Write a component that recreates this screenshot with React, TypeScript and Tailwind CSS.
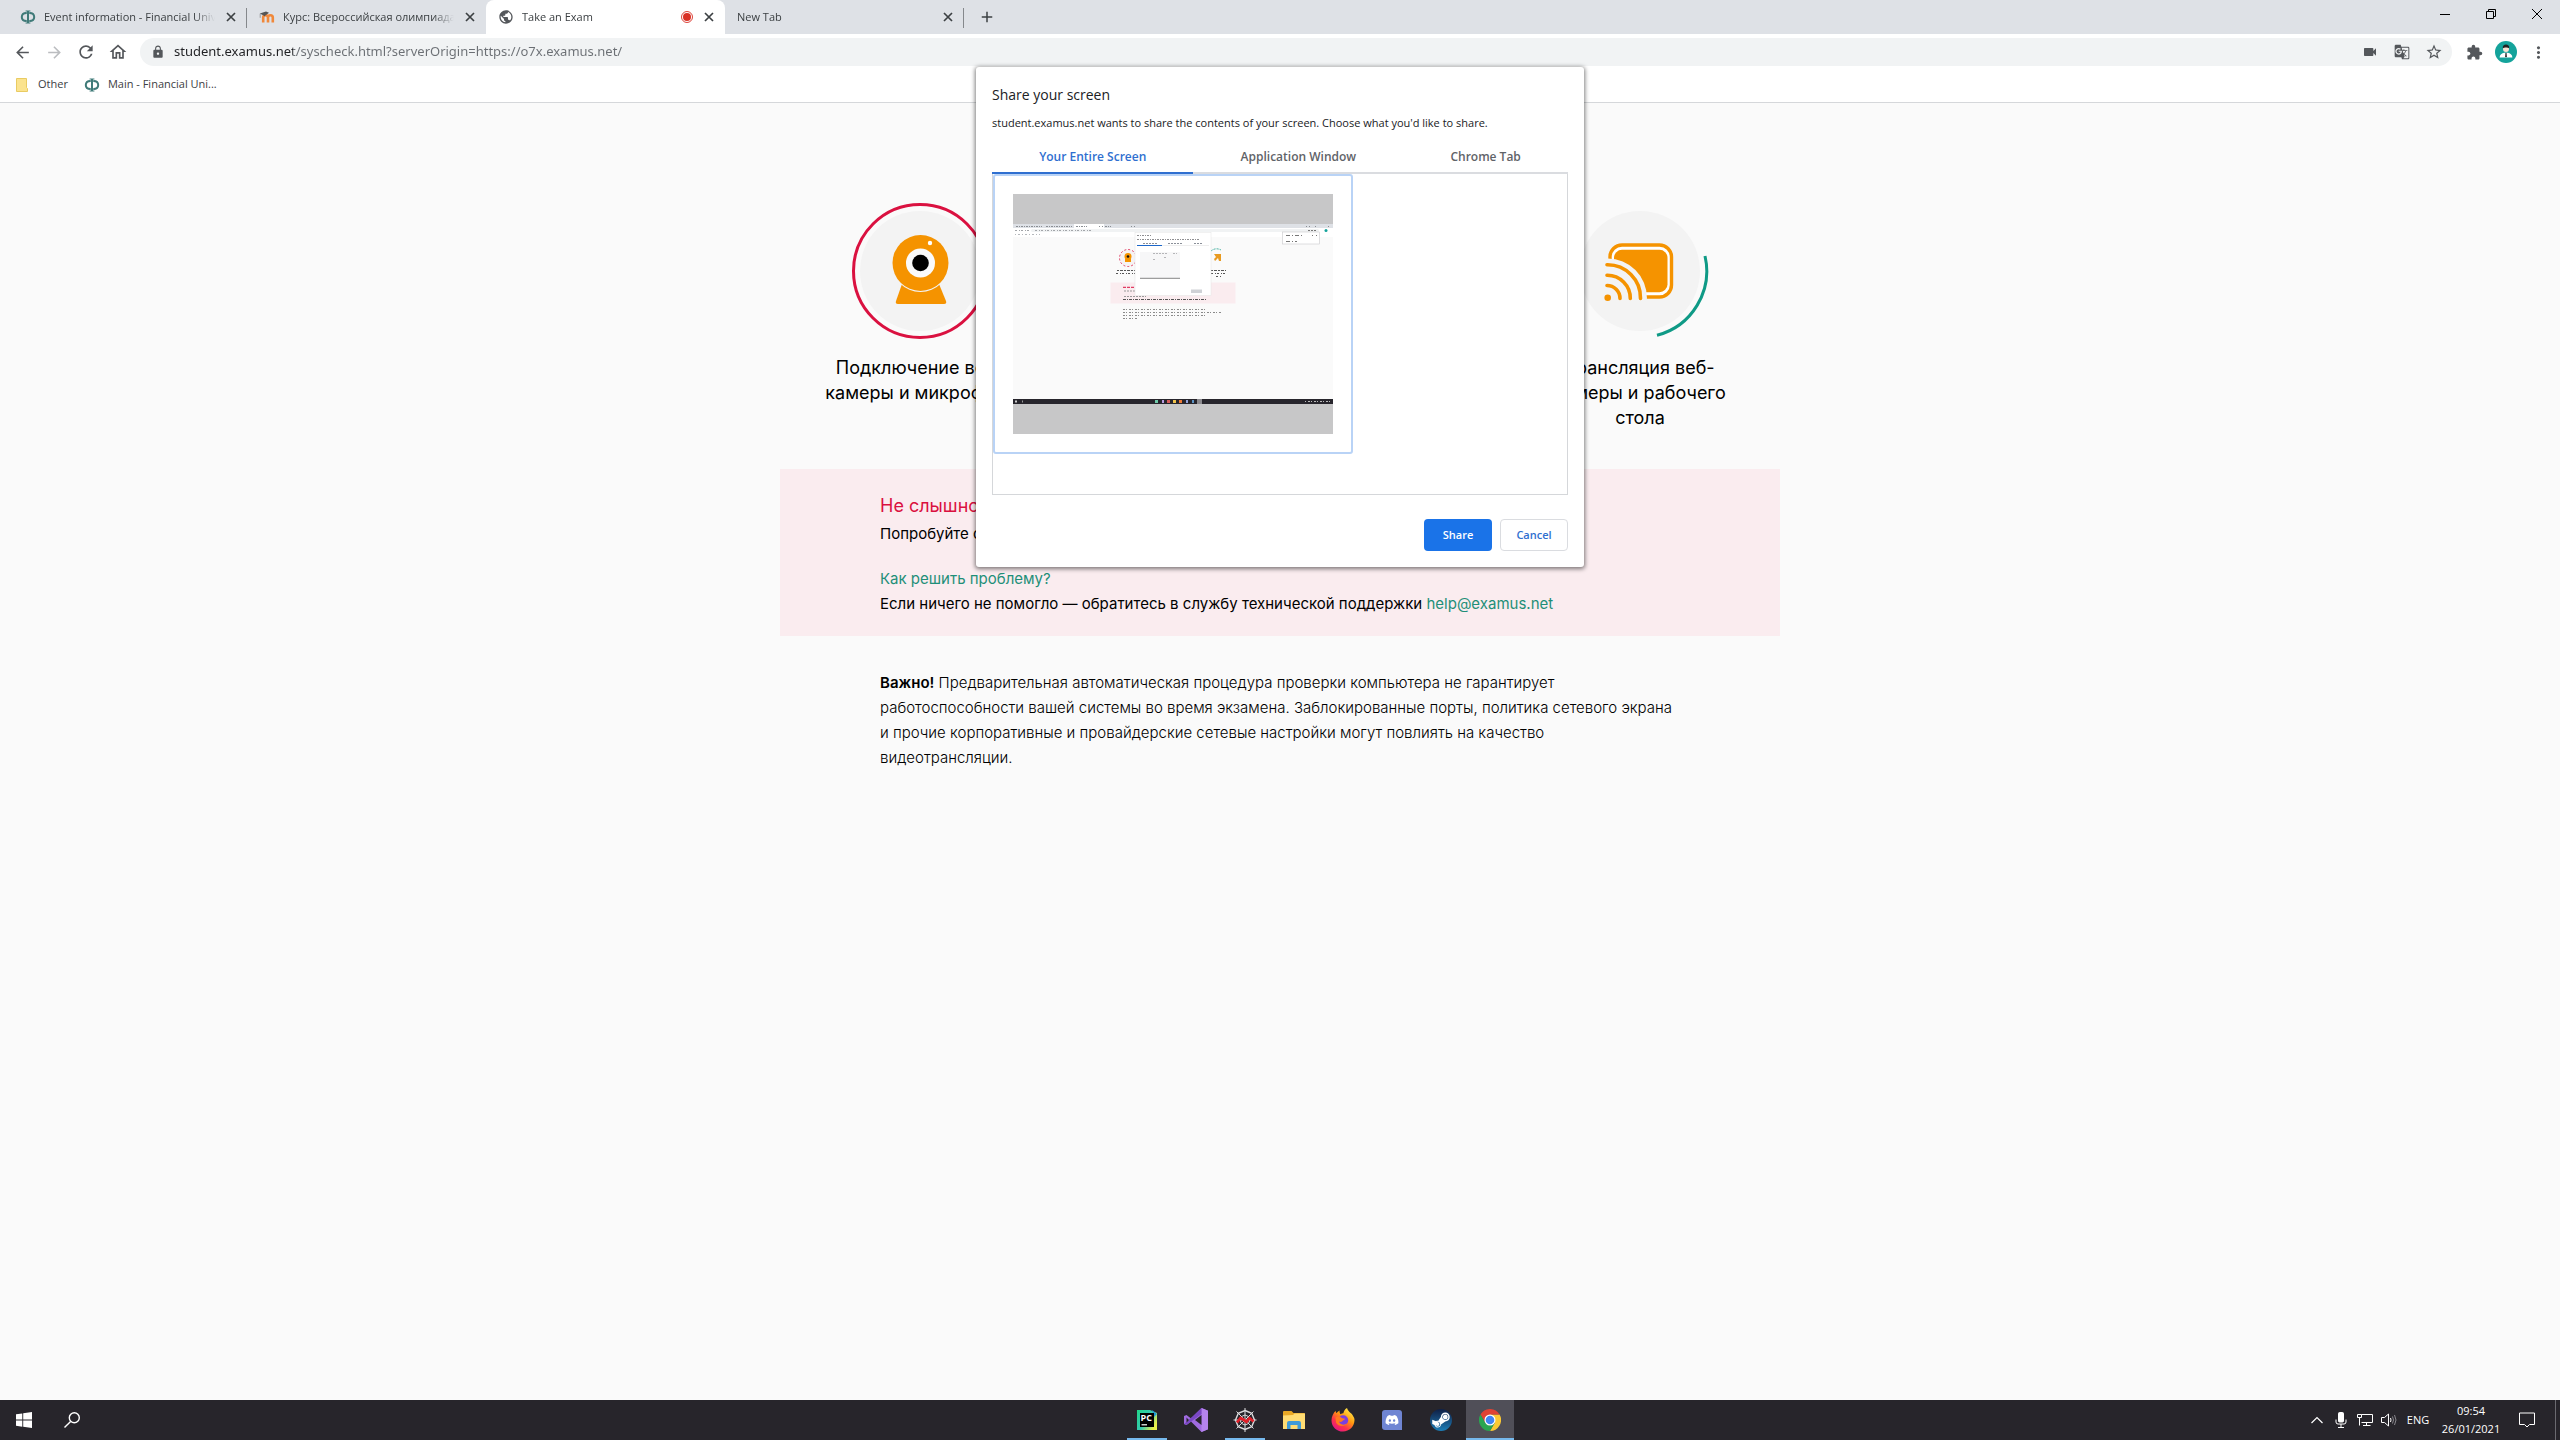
import type { ReactNode } from "react";
import {
  MdAdd,
  MdArrowBack,
  MdArrowForward,
  MdExtension,
  MdGTranslate,
  MdLock,
  MdMoreVert,
  MdOutlineHome,
  MdPublic,
  MdRefresh,
  MdStarBorder,
  MdVideocam,
} from "react-icons/md";
import { FaDiscord, FaSteamSymbol } from "react-icons/fa";

/* ---------- small drawings ---------- */

function PhiIcon() {
  return (
    <svg viewBox="0 0 16 16" className="size-4 shrink-0" fill="none" stroke="#3f7a78">
      <path d="M6.500 3.900Q1.800 4 1.800 8t4.700 4.100M9.500 3.900q4.700.1 4.700 4.100t-4.700 4.100" strokeWidth="2" />
      <path d="M5.500 4h5M5.500 12h5" strokeWidth="1" />
      <path d="M8 2v12" strokeWidth="2" />
      <path d="M5.600 2h4.800M5.600 14h4.800" strokeWidth="1" />
    </svg>
  );
}

function MoodleIcon() {
  return (
    <svg viewBox="0 0 16 16" className="size-4 shrink-0" fill="none">
      <path d="M4.200 13.500V8.600a2.400 2.400 0 0 1 4.800 0v4.900M9 8.600a2.400 2.400 0 0 1 4.800 0v4.900" stroke="#f0883a" strokeWidth="2.600" />
      <path d="M.8 4.600 7 2.600l3 1.200-4.600 3.400-1.200-.9z" fill="#555" />
      <path d="M1.200 4.800v4" stroke="#8a8a8a" strokeWidth=".8" />
    </svg>
  );
}

function CloseIcon() {
  return (
    <svg viewBox="0 0 10 10" className="size-[10px]" fill="none" stroke="currentColor" strokeWidth="1.700">
      <path d="m1 1 8 8M9 1 1 9" />
    </svg>
  );
}

function RecordingDot() {
  return (
    <svg viewBox="0 0 12 12" className="size-3 shrink-0">
      <circle cx="6" cy="6" r="5.500" fill="#fff" stroke="#d93025" strokeWidth=".9" />
      <circle cx="6" cy="6" r="4" fill="#d93025" />
    </svg>
  );
}

function AvatarIcon() {
  return (
    <svg viewBox="0 0 22 22" className="size-[22px]">
      <circle cx="11" cy="11" r="11" fill="#14a39b" />
      <path d="M4.600 16.400c.2-3 2.200-3.900 4.600-4.600h3.600c2.400.7 4.400 1.600 4.600 4.600z" fill="#fff" />
      <circle cx="11" cy="8" r="3" fill="#f7e3d4" />
      <path d="M7.800 7.200C7.400 4.600 9 3.400 11 3.400s3.600 1.200 3.200 3.800C13 6.200 9 6.200 7.800 7.200z" fill="#222" />
      <path d="M10.400 12h1.200l.3 3.400-.9 1-.9-1z" fill="#333" />
    </svg>
  );
}

function WebcamDrawing() {
  return (
    <svg viewBox="0 0 140 140" className="size-[140px]" role="img" aria-label="Веб-камера">
      <circle cx="70" cy="70" r="60" fill="#f3f3f3" />
      <circle cx="70" cy="70" r="66.500" fill="none" stroke="#da1140" strokeWidth="3" />
      <path d="M52 83h37l7 17q1 3-2 3H48q-3 0-2-3z" fill="#f59300" />
      <circle cx="70.500" cy="62" r="29" fill="#f3f3f3" />
      <circle cx="70.500" cy="62" r="28" fill="#f59300" />
      <circle cx="70.500" cy="62" r="14.500" fill="#fafafa" />
      <circle cx="70.500" cy="62" r="8.300" fill="#000" />
      <circle cx="80" cy="42" r="2.200" fill="#fff" />
    </svg>
  );
}

function CastDrawing() {
  return (
    <svg viewBox="0 0 140 140" className="size-[140px]" role="img" aria-label="Трансляция">
      <circle cx="70" cy="70" r="60" fill="#f3f3f3" />
      <path d="M135 55A66.500 66.500 0 0 1 87 134.300" fill="none" stroke="#0f9a86" strokeWidth="3" />
      <rect x="40" y="44" width="61.500" height="52" rx="12" fill="#fff" stroke="#f59300" strokeWidth="3.400" />
      <rect x="44" y="48.800" width="53.500" height="42.400" rx="8" fill="#f59300" />
      <path d="M34 57.500h3.700A39.200 39.200 0 0 1 76.900 96.700V102H34z" fill="#f3f3f3" />
      <g fill="none" stroke="#f59300" strokeWidth="3.600" strokeLinecap="round">
        <path d="M37 63.800a33 33 0 0 1 33.500 33.700" />
        <path d="M37 74.200a23 23 0 0 1 23.300 23.300" />
        <path d="M37 84.500a13 13 0 0 1 13 13" />
      </g>
      <circle cx="37.700" cy="96.700" r="3.300" fill="#f59300" />
    </svg>
  );
}

function ScreenPreview() {
  return (
    <svg viewBox="0 0 320 240" className="block w-full" role="img" aria-label="Screen preview">
      <rect width="320" height="240" fill="#c7c7c8" />
      <rect y="30" width="320" height="180" fill="#fafafa" />
      <rect y="30" width="320" height="4.500" fill="#dee1e6" />
      <rect x="61" y="30" width="30" height="4.500" fill="#fff" />
      <rect y="34" width="320" height="9" fill="#fff" />
      <rect x="18" y="35" width="288" height="3" rx="1.500" fill="#f1f3f4" />
      <g strokeWidth="1" fill="none">
        <path d="M3 32.500h26M33 32.500h26M63 32.500h11M92 32.500h6" stroke="#8b8f94" strokeDasharray="2 1 1 1" />
        <path d="M86 32.500h4M118 32.500h6M293 32.500h4M302 32.500h3M315 32.500h3" stroke="#8b8f94" strokeDasharray="1 2" />
        <path d="M2 36.500h14M22 36.500h56" stroke="#a2a5a9" strokeDasharray="2 2 1 1" />
        <path d="M2 40.500h25" stroke="#b5b8bc" strokeDasharray="1 2 2 2" />
        <path d="M295 36.500h9" stroke="#777" strokeDasharray="2 1" />
      </g>
      <circle cx="313" cy="36.500" r="1.500" fill="#14a39b" />
      <rect x="97.500" y="88.500" width="125" height="21" fill="#faecef" />
      <circle cx="115" cy="64" r="8.500" fill="#f6f3f3" stroke="#da1140" strokeWidth=".8" strokeDasharray="2 2" />
      <circle cx="115" cy="62.500" r="3.500" fill="#f59300" />
      <rect x="112" y="65" width="6" height="3" fill="#f59300" />
      <circle cx="115" cy="62.500" r="1.300" fill="#111" />
      <path d="M198 57a8.500 8.500 0 0 1 10-1" stroke="#0f9a86" strokeWidth=".8" fill="none" strokeDasharray="2 1" />
      <path d="M201 60h7v7h-2l-1-3-3 3-1-2 2-2z" fill="#e89a20" />
      <g stroke="#555" strokeWidth="1" fill="none">
        <path d="M104 76.500h18M198 76.500h15" strokeDasharray="2 1 3 1" />
        <path d="M103 79.500h19M198 79.500h16M203 82.500h5" strokeDasharray="2 2 1 1" />
        <path d="M111 97h11M111 102.500h22" stroke="#999" strokeDasharray="2 1" />
        <path d="M110 105.500h83" strokeDasharray="3 1 1 1" />
        <path d="M110 115.500h84M110 118.500h98M110 121.500h84M110 124.500h14" stroke="#8a8a8a" strokeDasharray="2 1 1 2" />
        <path d="M110 93.300h12" stroke="#da1140" strokeDasharray="3 1" />
      </g>
      <rect x="122" y="38.500" width="76" height="63" fill="#fff" stroke="#e4e4e4" strokeWidth=".5" />
      <g fill="none" strokeWidth="1">
        <path d="M124 41.500h15M124 45.500h63" stroke="#8f8f92" strokeDasharray="2 1 1 1" />
        <path d="M130 49.500h14M155 49.500h14M181 49.500h9" stroke="#8b9099" strokeDasharray="2 1" />
        <path d="M124 51.500h25" stroke="#1b66c9" />
        <path d="M149 51.500h47" stroke="#ddd" strokeWidth=".5" />
      </g>
      <rect x="127" y="58" width="40" height="26" fill="#f7f7f8" />
      <path d="M127 84.300h40" stroke="#666" strokeWidth=".8" />
      <path d="M140 59.500h14M160 59.500h4M140 65.500h3M151 63.500h3" stroke="#b5b5b8" strokeDasharray="2 1" />
      <rect x="178" y="95.500" width="11" height="3.500" fill="#cfd2d6" />
      <rect x="269.500" y="38" width="37" height="12" fill="#fff" stroke="#c9c9cb" strokeWidth=".6" />
      <path d="M273 41.500h17M273 47.500h11" stroke="#777" strokeDasharray="4 2 1 2" fill="none" />
      <path d="M299 41.500h5" stroke="#777" strokeDasharray="1 3" fill="none" />
      <rect y="205" width="320" height="5" fill="#27252c" />
      <rect x="2" y="206.500" width="2" height="2" fill="#ccc" />
      <rect x="9" y="206.500" width="1" height="2" fill="#999" />
      <rect x="142" y="206" width="3" height="3" fill="#6fc9a8" />
      <rect x="149" y="206" width="2" height="3" fill="#b79ae0" />
      <rect x="154" y="206" width="3" height="3" fill="#d65a5a" />
      <rect x="160" y="206" width="3" height="3" fill="#f0c24a" />
      <rect x="166" y="206" width="3" height="3" fill="#ef7a35" />
      <rect x="173" y="206" width="2" height="3" fill="#95a3dc" />
      <rect x="179" y="206" width="2" height="3" fill="#5c93c4" />
      <rect x="184" y="205" width="5" height="5" fill="#8b8a8f" />
      <path d="M292 207.500h26" stroke="#bbb" strokeDasharray="1 2 2 1" />
    </svg>
  );
}

/* ---------- browser window ---------- */

function ToolButton({ label, children }: { label: string; children: ReactNode }) {
  return (
    <button type="button" aria-label={label} className="flex h-7 w-8 shrink-0 items-center justify-center text-[#54575b]">
      {children}
    </button>
  );
}

type TabProps = { title: string; icon?: ReactNode; active?: boolean; recording?: boolean; divider?: boolean };

function BrowserTab({ title, icon, active, recording, divider }: TabProps) {
  return (
    <div
      className={
        active
          ? "flex h-full w-[239px] min-w-0 items-center rounded-t-lg bg-white pr-2 pl-3"
          : "relative flex h-full w-[239px] min-w-0 items-center pr-2 pl-3"
      }
    >
      <button type="button" className="flex min-w-0 flex-1 items-center gap-2 text-left text-[11px] text-[#3c4043]">
        {icon}
        <span className="flex-1 overflow-hidden whitespace-nowrap [mask-image:linear-gradient(to_right,black_88%,transparent)]">
          {title}
        </span>
      </button>
      {recording && <RecordingDot />}
      <button type="button" aria-label={"Close " + title} className="ml-2 flex size-4 items-center justify-center text-[#3c4043]">
        <CloseIcon />
      </button>
      {divider && <span className="absolute top-2 right-0 h-5 w-px bg-[#85888c]" />}
    </div>
  );
}

function TabStrip() {
  return (
    <div className="flex h-[34px] bg-[#dee1e6] pl-2">
      <BrowserTab title="Event information - Financial University" icon={<PhiIcon />} divider />
      <BrowserTab title="Курс: Всероссийская олимпиада школьников" icon={<MoodleIcon />} />
      <BrowserTab title="Take an Exam" icon={<MdPublic className="size-4 shrink-0 text-[#54575b]" />} active recording />
      <BrowserTab title="New Tab" divider />
      <button type="button" aria-label="New tab" className="ml-[11px] flex w-6 items-center justify-center text-[#3c4043]">
        <MdAdd className="size-[18px]" />
      </button>
      <div className="ml-auto flex h-7 text-black">
        <button type="button" aria-label="Minimize" className="flex w-[46px] items-center justify-center">
          <svg viewBox="0 0 10 10" className="size-[10px]" stroke="currentColor"><path d="M0 5.500h10" /></svg>
        </button>
        <button type="button" aria-label="Restore" className="flex w-[46px] items-center justify-center">
          <svg viewBox="0 0 10 10" className="size-[10px]" fill="none" stroke="currentColor">
            <path d="M.5 2.500h7v7h-7zM2.500 2.500v-2h7v7h-2" />
          </svg>
        </button>
        <button type="button" aria-label="Close" className="flex w-[46px] items-center justify-center">
          <svg viewBox="0 0 10 10" className="size-[10px]" fill="none" stroke="currentColor"><path d="m0 0 10 10M10 0 0 10" /></svg>
        </button>
      </div>
    </div>
  );
}

function Toolbar() {
  return (
    <div className="flex h-9 items-center bg-white px-[6px]">
      <ToolButton label="Back"><MdArrowBack className="size-[19px]" /></ToolButton>
      <ToolButton label="Forward"><MdArrowForward className="size-[19px] text-[#bbbdc0]" /></ToolButton>
      <ToolButton label="Reload"><MdRefresh className="size-[20px]" /></ToolButton>
      <ToolButton label="Home"><MdOutlineHome className="size-[20px]" /></ToolButton>
      <div className="ml-[6px] flex h-7 flex-1 items-center rounded-full bg-[#f1f3f4] pr-[2px] pl-[11px]">
        <MdLock className="size-[14px] text-[#54575b]" />
        <input
          type="text"
          aria-label="Address"
          defaultValue="student.examus.net/syscheck.html?serverOrigin=https://o7x.examus.net/"
          className="ml-[9px] min-w-0 flex-1 bg-[linear-gradient(to_right,#202124_119px,#6b6f74_119px)] bg-clip-text font-['Noto_Sans','Open_Sans',sans-serif] text-[13px] text-transparent outline-none"
        />
        <ToolButton label="Camera"><MdVideocam className="size-4" /></ToolButton>
        <ToolButton label="Translate"><MdGTranslate className="size-4" /></ToolButton>
        <ToolButton label="Bookmark"><MdStarBorder className="size-[18px]" /></ToolButton>
      </div>
      <div className="ml-[6px] flex">
        <ToolButton label="Extensions"><MdExtension className="size-[17px]" /></ToolButton>
        <ToolButton label="Profile"><AvatarIcon /></ToolButton>
        <ToolButton label="Menu"><MdMoreVert className="size-[19px]" /></ToolButton>
      </div>
    </div>
  );
}

function BookmarksBar() {
  return (
    <nav className="flex h-[33px] items-center gap-4 border-b border-[#d5d7da] bg-white pb-[3px] pl-4 text-[11px] text-[#3c4043]">
      <button type="button" className="flex items-center gap-[10px]">
        <svg viewBox="0 0 12 14" className="h-[14px] w-3">
          <path d="M.5.500h10v9l1 1v3H.5z" fill="#fbe38e" stroke="#e9cb62" />
        </svg>
        Other
      </button>
      <a href="#main" className="flex items-center gap-2">
        <PhiIcon />
        Main - Financial Uni...
      </a>
    </nav>
  );
}

/* ---------- page ---------- */

function Step({ drawing, children }: { drawing: ReactNode; children: ReactNode }) {
  return (
    <div className="flex w-[240px] flex-col items-center text-center">
      {drawing}
      <p className="mt-[14px] text-[18px] leading-[25px]">{children}</p>
    </div>
  );
}

function SystemCheck() {
  return (
    <main className="mx-auto w-full max-w-[1000px] pt-[98px] font-['Inter','Liberation_Sans',sans-serif] text-[15px] leading-[25px] text-black">
      <div className="flex justify-between px-5">
        <Step drawing={<WebcamDrawing />}>Подключение веб-<br />камеры и микрофона</Step>
        <Step drawing={<CastDrawing />}>Трансляция веб-<br />камеры и рабочего<br />стола</Step>
      </div>
      <section className="mt-[39px] bg-[#faecef] px-[100px] pt-6 pb-5">
        <h2 className="text-[18px] leading-[25px] text-[#da1140]">Не слышно звука</h2>
        <p className="mt-[3px]">Попробуйте сменить</p>
        <p className="mt-5"><a href="#solve" className="text-[#1f8f78]">Как решить проблему?</a></p>
        <p>
          Если ничего не помогло — обратитесь в службу технической поддержки{" "}
          <a href="mailto:help@examus.net" className="text-[#1f8f78]">help@examus.net</a>
        </p>
      </section>
      <p className="mx-[100px] mt-[34px] font-light">
        <b className="font-semibold">Важно!</b> Предварительная автоматическая процедура проверки компьютера не гарантирует
        работоспособности вашей системы во время экзамена. Заблокированные порты, политика сетевого экрана
        и прочие корпоративные и провайдерские сетевые настройки могут повлиять на качество
        видеотрансляции.
      </p>
    </main>
  );
}

function ShareDialog() {
  return (
    <div
      role="dialog"
      aria-labelledby="share-title"
      className="absolute top-[67px] left-1/2 w-[608px] -translate-x-1/2 rounded-[3px] bg-white px-4 pt-[18px] pb-4 text-[#202124] shadow-[0_1px_4px_1px_rgba(0,0,0,0.5)]"
    >
      <h1 id="share-title" className="text-sm">Share your screen</h1>
      <p className="mt-[10px] text-[11px] leading-4">
        student.examus.net wants to share the contents of your screen. Choose what you'd like to share.
      </p>
      <div role="tablist" className="mt-[10px] flex text-[12px] leading-4 font-semibold text-[#5f6368]">
        <button type="button" role="tab" aria-selected="true" className="flex-auto border-b-2 border-[#2f6fd0] pt-2 pb-[7px] text-[#2f6fd0]">
          Your Entire Screen
        </button>
        <button type="button" role="tab" aria-selected="false" className="flex-auto border-b-2 border-[#dadce0] pt-2 pb-[7px]">
          Application Window
        </button>
        <button type="button" role="tab" aria-selected="false" className="flex-auto border-b-2 border-[#dadce0] pt-2 pb-[7px]">
          Chrome Tab
        </button>
      </div>
      <div role="tabpanel" className="h-[321px] border border-t-0 border-[#d5d7da]">
        <button type="button" aria-label="Entire screen" className="block w-[360px] rounded-[3px] border-2 border-[#b9d3f6] p-[18px]">
          <ScreenPreview />
        </button>
      </div>
      <div className="mt-6 flex justify-end gap-2 text-[11px] font-semibold">
        <button type="button" className="h-8 w-[68px] rounded-[4px] bg-[#1a73e8] text-white">Share</button>
        <button type="button" className="h-8 w-[68px] rounded-[4px] border border-[#dadce0] text-[#2f6fd0]">Cancel</button>
      </div>
    </div>
  );
}

/* ---------- taskbar ---------- */

function PyCharmIcon() {
  return (
    <svg viewBox="0 0 22 22" className="size-[22px]">
      <defs>
        <linearGradient id="pc" x1="0" y1="0" x2="1" y2="0.6">
          <stop offset="0" stopColor="#21d789" />
          <stop offset=".55" stopColor="#35c9b0" />
          <stop offset="1" stopColor="#e8ef4a" />
        </linearGradient>
      </defs>
      <path d="M1 1h13l7 3v17H1z" fill="url(#pc)" />
      <path d="m16 1 5 4-3 3z" fill="#1f9bd6" />
      <rect x="4" y="4" width="14" height="14" fill="#000" />
      <text x="4.500" y="12" fontSize="9" fontWeight="700" fill="#fff" fontFamily="Open Sans, sans-serif">PC</text>
      <path d="M5.500 15.800h5.500" stroke="#fff" strokeWidth="1.200" />
    </svg>
  );
}

function VisualStudioIcon() {
  return (
    <svg viewBox="0 0 24 24" className="size-6">
      <path d="M17.500 0 7 10.500 2.500 7 0 8v8l2.500 1L7 13.500 17.500 24 24 21.300V2.700z" fill="#a06be0" />
      <path d="M17.500 0 24 2.700v18.600L17.500 24z" fill="#b583ee" />
      <path d="M17.500 0v6L2.500 17 0 16l9-8z" fill="#7a48c4" />
      <path d="M2.500 9.500v5L5 12zM17.500 7l-6.500 5 6.500 5z" fill="#27252c" />
    </svg>
  );
}

function WebIcon() {
  return (
    <svg viewBox="0 0 24 24" className="size-6" fill="none">
      <g stroke="#dcdcde" strokeWidth="1">
        <path d="M12 0v24M.5 12h23M3.500 3.500l17 17M20.500 3.500l-17 17" />
        <path d="M12 2.500 18.700 5.300 21.500 12l-2.800 6.700L12 21.500l-6.700-2.800L2.500 12l2.800-6.700z" strokeWidth="1.400" />
        <path d="m12 7 3.500 1.500L17 12l-1.500 3.500L12 17l-3.500-1.500L7 12l1.500-3.500z" />
      </g>
      <path d="M4 14.500 7.500 10l3.500 2 2.500 1.800L16.500 10l4 3.500" stroke="#e0202a" strokeWidth="2.800" strokeLinejoin="round" />
    </svg>
  );
}

function ExplorerIcon() {
  return (
    <svg viewBox="0 0 22 18" className="h-[18px] w-[22px]">
      <path d="M0 1q0-1 1-1h7.500L10.500 2H21q1 0 1 1v15H0z" fill="#e9a825" />
      <path d="M0 4.500 10 4l1.500-1.500H22V18H0z" fill="#ffdc73" />
      <path d="M4 18v-6q0-2 2-2h10q2 0 2 2v6h-3.500v-4h-7v4z" fill="#3f9bd8" />
    </svg>
  );
}

function FirefoxIcon() {
  return (
    <svg viewBox="0 0 24 24" className="size-6">
      <defs>
        <linearGradient id="ff" x1="0.85" y1="0.05" x2="0.2" y2="0.95">
          <stop offset="0" stopColor="#fff04f" />
          <stop offset=".4" stopColor="#ff980e" />
          <stop offset=".7" stopColor="#ff3647" />
          <stop offset="1" stopColor="#e31587" />
        </linearGradient>
      </defs>
      <path
        d="M22.200 8.200c-.6-1.400-1.700-2.600-2.600-3.200-1.500-1.600-3-2.600-3.600-5-2.300 1.300-3.400 3.500-3.600 5.300-1 .1-2 .4-2.900.9C8.600 5 8.400 3.600 8.600 2.600 7.300 3.200 6.200 4.200 5.500 5.100 4.900 4.600 4.700 3.500 4.700 2.700 2.500 4.700.5 8.500.5 12.500.5 19 5.700 23.600 12 23.600s11.500-5 11.500-11.500c0-1.400-.4-2.800-1.300-3.900z"
        fill="url(#ff)"
      />
      <circle cx="12.200" cy="12.300" r="5" fill="#7b3fe0" />
      <path d="M4.500 9.500c2-1.500 4.500-1.200 6 .2 1 .9 2.700.5 3.500 1-.2 1.200-2 1.500-2.800 2.500-.7 1-2.200.7-3.200.6 1.300 3 5.500 3.800 8 1.800-1.500 3.400-9 3.600-11-1z" fill="#ff7a1f" />
    </svg>
  );
}

function DiscordIcon() {
  return (
    <span className="flex h-5 w-5 items-center justify-center rounded-[3px] rounded-br-none bg-[#6f85d3] text-white">
      <FaDiscord className="size-[14px]" />
    </span>
  );
}

function SteamIcon() {
  return (
    <span className="flex size-[22px] items-center justify-center rounded-full bg-linear-to-b from-[#0e1f45] to-[#1c7fb8] text-white">
      <FaSteamSymbol className="size-[20px]" />
    </span>
  );
}

function ChromeIcon() {
  return (
    <svg viewBox="0 0 22 22" className="size-[22px]">
      <path d="M11 5.500h9.530A11 11 0 0 1 11 22l4.760-8.250z" fill="#fcc934" />
      <path d="M1.470 5.500 6.240 13.750 11 5.500h9.530A11 11 0 0 0 1.470 5.500z" fill="#e04335" />
      <path d="M1.470 5.500 6.240 13.750 11 16.500l4.760-2.750L11 22A11 11 0 0 1 1.470 5.500z" fill="#2aa551" />
      <circle cx="11" cy="11" r="5.500" fill="#fff" />
      <circle cx="11" cy="11" r="4.300" fill="#4285f4" />
    </svg>
  );
}

function TaskButton({ label, state, children }: { label: string; state?: "open" | "focused"; children: ReactNode }) {
  return (
    <button
      type="button"
      aria-label={label}
      className={
        state === "focused"
          ? "relative flex w-12 items-center justify-center bg-[#504f58]"
          : "relative flex w-12 items-center justify-center"
      }
    >
      {children}
      {state === "focused" && <span className="absolute inset-x-0 bottom-0 h-[2px] bg-[#76b9ed]" />}
      {state === "open" && <span className="absolute inset-x-1 bottom-0 h-[2px] bg-[#76b9ed]" />}
    </button>
  );
}

function Taskbar() {
  return (
    <footer className="flex h-10 bg-[#27252b] text-white">
      <div className="flex flex-1">
        <TaskButton label="Start">
          <svg viewBox="0 0 16 16" className="size-4" fill="#fff">
            <path d="M0 2.300 6.300 1.400v6.200H0zM7.200 1.200 16 0v7.600H7.200zM0 8.500h6.300v6.200L0 13.800zM7.200 8.500H16V16l-8.800-1.200z" />
          </svg>
        </TaskButton>
        <TaskButton label="Search">
          <svg viewBox="0 0 16 16" className="size-4" fill="none" stroke="#fff" strokeWidth="1.400">
            <circle cx="10.300" cy="5.700" r="5" />
            <path d="M6.600 9.400.5 15.500" />
          </svg>
        </TaskButton>
      </div>
      <div className="ml-[77px] flex gap-px">
        <TaskButton label="PyCharm" state="open"><PyCharmIcon /></TaskButton>
        <TaskButton label="Visual Studio"><VisualStudioIcon /></TaskButton>
        <TaskButton label="Web" state="open"><WebIcon /></TaskButton>
        <TaskButton label="File Explorer"><ExplorerIcon /></TaskButton>
        <TaskButton label="Firefox"><FirefoxIcon /></TaskButton>
        <TaskButton label="Discord"><DiscordIcon /></TaskButton>
        <TaskButton label="Steam"><SteamIcon /></TaskButton>
        <TaskButton label="Chrome" state="focused"><ChromeIcon /></TaskButton>
      </div>
      <div className="flex flex-1 items-center justify-end">
        <button type="button" aria-label="Show hidden icons" className="flex w-6 justify-center">
          <svg viewBox="0 0 12 8" className="h-2 w-3" fill="none" stroke="#fff" strokeWidth="1.200"><path d="m.5 7 5.500-5.500L11.500 7" /></svg>
        </button>
        <button type="button" aria-label="Microphone" className="flex w-6 justify-center">
          <svg viewBox="0 0 12 16" className="h-4 w-3" fill="none" stroke="#fff">
            <rect x="3.500" y=".5" width="5" height="9.500" rx="1" fill="#fff" />
            <path d="M1 7.500v2.500q0 2 2 2h6q2 0 2-2V7.500M6 12v3.500M3 15.500h6" />
          </svg>
        </button>
        <button type="button" aria-label="Network" className="flex w-6 justify-center">
          <svg viewBox="0 0 16 14" className="h-[14px] w-4" fill="none" stroke="#fff">
            <path d="M4.500 1.500h11v8h-11M.5 1.500h4v3h-4zM2.500 4.500v8M9.500 9.500v3M6 12.500h7.500" />
          </svg>
        </button>
        <button type="button" aria-label="Volume" className="flex w-6 justify-center">
          <svg viewBox="0 0 17 14" className="h-[14px] w-[17px]" fill="none" stroke="#fff">
            <path d="M.5 4.500h3l4-3.500v12l-4-3.500h-3zM9.500 5q1 2 0 4" />
            <path d="M11.500 3.500q2 3.500 0 7M13.500 2q3 5 0 10" stroke="#8a888e" />
          </svg>
        </button>
        <button type="button" className="w-[34px] text-[11px]">ENG</button>
        <button type="button" className="w-[72px] text-center text-[11px] leading-[18px]">
          09:54<br />26/01/2021
        </button>
        <button type="button" aria-label="Notifications" className="flex w-10 justify-center">
          <svg viewBox="0 0 16 16" className="size-4" fill="none" stroke="#fff"><path d="M.5 1h15v11.500h-5L8 15l-2.500-2.500h-5z" /></svg>
        </button>
        <span className="mr-1 ml-2 h-full w-px bg-[#6b6a70]" />
      </div>
    </footer>
  );
}

export default function App() {
  return (
    <div className="relative flex min-h-screen flex-col bg-[#fafafa] font-['Open_Sans','Liberation_Sans',sans-serif]">
      <header>
        <TabStrip />
        <Toolbar />
        <BookmarksBar />
      </header>
      <div className="flex-1"><SystemCheck /></div>
      <Taskbar />
      <ShareDialog />
    </div>
  );
}
